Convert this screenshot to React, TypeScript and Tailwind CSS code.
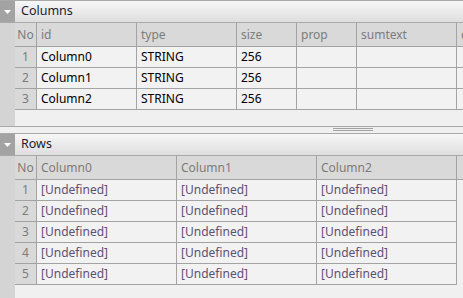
import React from "react";

type Col = { name: string; w: string };

const colCols: Col[] = [
  { name: "No", w: "w-[22px]" },
  { name: "id", w: "w-[100px]" },
  { name: "type", w: "w-[100px]" },
  { name: "size", w: "w-[60px]" },
  { name: "prop", w: "w-[60px]" },
  { name: "sumtext", w: "w-[100px]" },
  { name: "default", w: "w-[100px]" },
];

const colRows = [
  ["Column0", "STRING", "256", "", "", ""],
  ["Column1", "STRING", "256", "", "", ""],
  ["Column2", "STRING", "256", "", "", ""],
];

const rowCols: Col[] = [
  { name: "No", w: "w-[22px]" },
  { name: "Column0", w: "w-[140px]" },
  { name: "Column1", w: "w-[140px]" },
  { name: "Column2", w: "w-[140px]" },
];

function SectionHeader({ title }: { title: string }) {
  return (
    <div className="flex h-[23px] shrink-0 border-y border-[#a9a9a9]">
      {/* 접기 버튼 */}
      <div className="flex w-[15px] items-center justify-center bg-[#a3a3a3]">
        <svg width="7" height="4" viewBox="0 0 7 4">
          <path d="M0 0h7L3.5 4z" fill="#fff" />
        </svg>
      </div>
      <div className="flex flex-1 items-center bg-gradient-to-b from-[#f7f7f7] to-[#dedede] pl-[6px] text-[12.5px] text-[#1c1c2c]">
        {title}
      </div>
    </div>
  );
}

function HeaderRow({ cols, fill }: { cols: Col[]; fill?: boolean }) {
  return (
    <div className="flex h-[24px] shrink-0 border-b border-[#a3a3a3] bg-[#d9d9d9] text-[#7c7c7c]">
      {cols.map((c, i) => (
        <div
          key={c.name}
          className={`${c.w} shrink-0 overflow-hidden whitespace-nowrap border-r border-[#a3a3a3] flex items-center ${
            i === 0 ? "justify-center" : "pl-[4px]"
          }`}
        >
          {c.name}
        </div>
      ))}
      {fill && <div className="flex-1" />}
    </div>
  );
}

function DataRow({
  no,
  cols,
  cells,
  muted,
}: {
  no: number;
  cols: Col[];
  cells: string[];
  muted?: boolean;
}) {
  return (
    <div className="flex h-[21px] shrink-0">
      <div className={`${cols[0].w} shrink-0 flex items-center justify-center border-r border-b border-[#a3a3a3] bg-[#d9d9d9] text-[#7c7c7c]`}>
        {no}
      </div>
      {cells.map((v, i) => (
        <div
          key={i}
          className={`${cols[i + 1].w} shrink-0 overflow-hidden whitespace-nowrap flex items-center pl-[4px] border-r border-b border-[#a3a3a3] bg-[#f2f2f2] ${
            muted ? "text-[#5e5072]" : "text-black"
          }`}
        >
          {v}
        </div>
      ))}
    </div>
  );
}

export default function App() {
  return (
    <div className="flex h-[298px] w-[463px] flex-col overflow-hidden bg-[#f0f0f0] font-['Noto_Sans',sans-serif] text-[12px] leading-none">
      {/* Columns 영역 */}
      <div className="flex h-[126px] shrink-0 flex-col">
        <SectionHeader title="Columns" />
        <div className="flex flex-1">
          <div className="w-[15px] shrink-0 bg-[#d4d4d4]" />
          <div className="flex flex-1 flex-col overflow-hidden">
            <HeaderRow cols={colCols} />
            {colRows.map((r, i) => (
              <DataRow key={i} no={i + 1} cols={colCols} cells={r} />
            ))}
          </div>
        </div>
      </div>

      {/* 스플리터 */}
      <div className="flex h-[7px] shrink-0 flex-col items-center border-t border-[#a9a9a9] pt-[1px]">
        <div className="ml-[243px] h-[3px] w-[40px] border-y border-[#a3a3a3]" />
      </div>

      {/* Rows 영역 */}
      <div className="flex flex-1 flex-col">
        <SectionHeader title="Rows" />
        <div className="flex flex-1">
          <div className="w-[15px] shrink-0 bg-[#d4d4d4]" />
          <div className="flex flex-1 flex-col overflow-hidden">
            <HeaderRow cols={rowCols} fill />
            {[1, 2, 3, 4, 5].map(n => (
              <DataRow
                key={n}
                no={n}
                cols={rowCols}
                cells={["[Undefined]", "[Undefined]", "[Undefined]"]}
                muted
              />
            ))}
          </div>
        </div>
      </div>
    </div>
  );
}
